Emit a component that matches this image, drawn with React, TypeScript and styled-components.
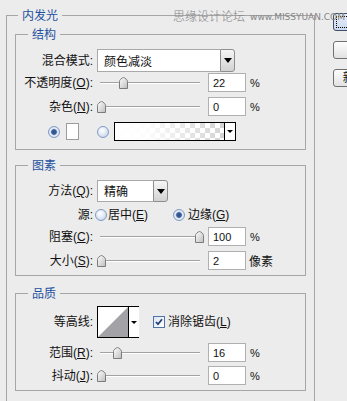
import React, { useId } from "react";
import styled, { createGlobalStyle, css } from "styled-components";

const GlobalStyle = createGlobalStyle`
  html, body { margin: 0; padding: 0; background: #ececec; }
  body {
    font-family: "Liberation Sans", "Noto Sans CJK SC", sans-serif;
    font-size: 12px;
    color: #111;
  }
`;

const Page = styled.div`
  position: relative;
  display: flex;
  align-items: flex-start;
  width: 347px;
  height: 401px;
  overflow: hidden;
  background: #ececec;
`;

const Outer = styled.fieldset`
  box-sizing: border-box;
  flex: none;
  width: 309px;
  height: 440px;
  margin: 7px 0 0 6px;
  padding: 3px 8px 0 8px;
  border: 1px solid #a6a6a6;
  min-width: 0;
`;

const Group = styled.fieldset<{ $mt?: number; $pt: number; $pb: number }>`
  box-sizing: border-box;
  margin: ${(p) => p.$mt ?? 0}px 0 0 0;
  padding: ${(p) => p.$pt}px 0 ${(p) => p.$pb}px 0;
  border: 1px solid #a6a6a6;
  min-width: 0;
`;

const Legend = styled.legend<{ $ml: number }>`
  margin-left: ${(p) => p.$ml}px;
  padding: 0 4px;
  font-family: "Noto Sans CJK SC", sans-serif;
  font-size: 12px;
  line-height: 16px;
  color: #1f519f;
`;

const Row = styled.div<{ $h: number; $mt?: number; $pl?: number }>`
  display: flex;
  align-items: center;
  height: ${(p) => p.$h}px;
  margin-top: ${(p) => p.$mt ?? 0}px;
  padding-left: ${(p) => p.$pl ?? 0}px;
`;

const Label = styled.span<{ $gap?: number }>`
  flex: none;
  width: 77px;
  margin-right: ${(p) => p.$gap ?? 4}px;
  text-align: right;
  white-space: nowrap;
  line-height: 16px;
  color: #111;
`;

const Select = styled.div<{ $w: number; $h: number }>`
  flex: none;
  display: flex;
  width: ${(p) => p.$w}px;
  height: ${(p) => p.$h}px;
`;

const SelectField = styled.div`
  flex: 1;
  display: flex;
  align-items: center;
  box-sizing: border-box;
  padding-left: 6px;
  border: 1px solid #a9a9a9;
  border-right: none;
  background: #fff;
  font-family: "Noto Sans CJK SC", sans-serif;
  line-height: 16px;
`;

const SelectButton = styled.div`
  flex: none;
  width: 15px;
  box-sizing: border-box;
  display: flex;
  align-items: center;
  justify-content: center;
  border: 1px solid #8e8e8e;
  border-radius: 0 3px 3px 0;
  background: linear-gradient(#f6f6f6, #d2d2d2);
  &::after {
    content: "";
    border-left: 4px solid transparent;
    border-right: 4px solid transparent;
    border-top: 5px solid #000;
  }
`;

const SliderBox = styled.div`
  position: relative;
  flex: none;
  width: 107px;
  height: 12px;
`;

const Track = styled.div`
  position: absolute;
  left: 3px;
  right: 4px;
  top: 5px;
  height: 1px;
  background: #a2a2a2;
  border-bottom: 1px solid #ffffff;
`;

const ThumbSvg = styled.svg`
  position: absolute;
  top: 0;
  width: 9px;
  height: 12px;
`;

const NumBox = styled.div`
  flex: none;
  box-sizing: border-box;
  width: 38px;
  height: 19px;
  margin-left: 4px;
  padding-left: 4px;
  display: flex;
  align-items: center;
  border: 1px solid #b0b0b0;
  background: #fff;
  font-family: "Liberation Sans", sans-serif;
  font-size: 11px;
  color: #111;
`;

const Unit = styled.span`
  margin-left: 4px;
  font-family: "Liberation Sans", "Noto Sans CJK SC", sans-serif;
  font-size: 11px;
  line-height: 16px;
  color: #111;
`;

const UnitCjk = styled.span`
  margin-left: 3px;
  font-family: "Noto Sans CJK SC", sans-serif;
  font-size: 12px;
  line-height: 16px;
  color: #111;
`;

const Radio = styled.span<{ $on?: boolean; $ml?: number }>`
  flex: none;
  width: 12px;
  height: 12px;
  margin-left: ${(p) => p.$ml ?? 0}px;
  box-sizing: border-box;
  border-radius: 50%;
  border: 1px solid #7f9cc4;
  background: radial-gradient(circle at 40% 35%, #ffffff 0, #e3ebf6 45%, #b9cbe3 100%);
  ${(p) =>
    p.$on &&
    css`
      background: radial-gradient(circle at 50% 50%, #2d5089 0, #3a5f9c 2.4px, #c6d4ea 3.2px, #eef3fa 4px, #b9cbe3 6px);
    `}
`;

const OptionText = styled.span<{ $ml?: number }>`
  margin-left: ${(p) => p.$ml ?? 2}px;
  line-height: 16px;
  white-space: nowrap;
`;

const Swatch = styled.span<{ $ml: number }>`
  flex: none;
  box-sizing: border-box;
  width: 13px;
  height: 17px;
  margin-left: ${(p) => p.$ml}px;
  border: 1px solid #9c9c9c;
  background: #fff;
`;

const GradientBox = styled.div`
  flex: none;
  display: flex;
  box-sizing: border-box;
  width: 122px;
  height: 19px;
  margin-left: 5px;
  border: 1px solid #000;
  background: #fff;
`;

const GradientFill = styled.div`
  flex: 1;
  background:
    linear-gradient(to right, #ffffff 0%, rgba(255, 255, 255, 0.92) 30%, rgba(255, 255, 255, 0) 100%),
    repeating-conic-gradient(#d3d3d3 0 25%, #ffffff 0 50%) 0 0 / 10px 10px;
`;

const MiniArrow = styled.div`
  flex: none;
  width: 10px;
  display: flex;
  align-items: center;
  justify-content: center;
  border-left: 1px solid #000;
  background: #fff;
  &::after {
    content: "";
    border-left: 3px solid transparent;
    border-right: 3px solid transparent;
    border-top: 3px solid #000;
  }
`;

const ContourBox = styled.div`
  flex: none;
  display: flex;
  box-sizing: border-box;
  width: 42px;
  height: 32px;
  border: 1px solid #000;
  background: #fff;
`;

const ContourPreview = styled.svg`
  flex: none;
  width: 30px;
  height: 30px;
`;

const CheckBox = styled.span`
  flex: none;
  box-sizing: border-box;
  width: 12px;
  height: 12px;
  margin-left: 14px;
  display: flex;
  align-items: center;
  justify-content: center;
  border: 1px solid #4f74aa;
  background: linear-gradient(135deg, #dce6f3, #ffffff);
`;

const Watermark = styled.div`
  position: absolute;
  left: 173px;
  top: 7px;
  display: flex;
  align-items: center;
  gap: 5px;
  height: 17px;
  color: #858585;
  pointer-events: none;
`;

const WatermarkCn = styled.span`
  font-family: "Noto Sans CJK SC", sans-serif;
  font-size: 12px;
  line-height: 16px;
  font-weight: 300;
`;

const WatermarkEn = styled.span`
  font-family: "DejaVu Sans", sans-serif;
  font-size: 9px;
  line-height: 12px;
  margin-top: 2px;
`;

const SideCol = styled.div`
  flex: none;
  display: flex;
  flex-direction: column;
  gap: 10px;
  margin: 13px 0 0 18px;
`;

const SideButton = styled.div<{ $default?: boolean }>`
  flex: none;
  box-sizing: border-box;
  width: 97px;
  height: 18px;
  display: flex;
  align-items: center;
  justify-content: center;
  border: 1px solid #707070;
  border-radius: 3px;
  background: linear-gradient(#fdfdfd, #e2e2e2);
  font-family: "Liberation Sans", "Noto Sans CJK SC", sans-serif;
  font-size: 12px;
  line-height: 16px;
  color: #111;
  ${(p) =>
    p.$default &&
    css`
      border-color: #3f5068;
      background: linear-gradient(#e9effa, #c9d8ef);
      outline: 1px dotted #000;
      outline-offset: -4px;
    `}
`;

function Slider({ value }: { value: number }) {
  const id = useId().replace(/:/g, "");
  return (
    <SliderBox>
      <Track />
      <ThumbSvg viewBox="0 0 9 12" style={{ left: Math.round(value * 0.98) }}>
        <defs>
          <linearGradient id={`g${id}`} x1="0" y1="0" x2="1" y2="1">
            <stop offset="0" stopColor="#ffffff" />
            <stop offset="1" stopColor="#bdbdbd" />
          </linearGradient>
        </defs>
        <path
          d="M0.5 11.5 V4.5 Q0.5 3.2 1.6 2.3 L3.4 0.9 Q4.5 0.1 5.6 0.9 L7.4 2.3 Q8.5 3.2 8.5 4.5 V11.5 Z"
          fill={`url(#g${id})`}
          stroke="#7c7c7c"
          strokeWidth="1"
        />
      </ThumbSvg>
    </SliderBox>
  );
}

function Key({ k }: { k: string }) {
  return (
    <>
      (<u>{k}</u>):
    </>
  );
}

export default function App() {
  return (
    <Page>
      <GlobalStyle />
      <Outer>
        <Legend $ml={3}>内发光</Legend>

        <Group $pt={7} $pb={8}>
          <Legend $ml={12}>结构</Legend>
          <Row $h={23}>
            <Label>混合模式:</Label>
            <Select $w={138} $h={23}>
              <SelectField>颜色减淡</SelectField>
              <SelectButton />
            </Select>
          </Row>
          <Row $h={19} $mt={1}>
            <Label>
              不透明度<Key k="O" />
            </Label>
            <Slider value={22} />
            <NumBox>22</NumBox>
            <Unit>%</Unit>
          </Row>
          <Row $h={19} $mt={5}>
            <Label>
              杂色<Key k="N" />
            </Label>
            <Slider value={0} />
            <NumBox>0</NumBox>
            <Unit>%</Unit>
          </Row>
          <Row $h={19} $mt={6} $pl={32}>
            <Radio $on />
            <Swatch $ml={6} />
            <Radio $ml={18} />
            <GradientBox>
              <GradientFill />
              <MiniArrow />
            </GradientBox>
          </Row>
        </Group>

        <Group $mt={7} $pt={7} $pb={5}>
          <Legend $ml={12}>图素</Legend>
          <Row $h={22}>
            <Label>
              方法<Key k="Q" />
            </Label>
            <Select $w={71} $h={22}>
              <SelectField>精确</SelectField>
              <SelectButton />
            </Select>
          </Row>
          <Row $h={20} $mt={3}>
            <Label $gap={2}>源:</Label>
            <Radio />
            <OptionText $ml={1}>
              居中(<u>E</u>)
            </OptionText>
            <Radio $on $ml={25} />
            <OptionText $ml={3}>
              边缘(<u>G</u>)
            </OptionText>
          </Row>
          <Row $h={19} $mt={2}>
            <Label>
              阻塞<Key k="C" />
            </Label>
            <Slider value={100} />
            <NumBox>100</NumBox>
            <Unit>%</Unit>
          </Row>
          <Row $h={19} $mt={5}>
            <Label>
              大小<Key k="S" />
            </Label>
            <Slider value={0} />
            <NumBox>2</NumBox>
            <UnitCjk>像素</UnitCjk>
          </Row>
        </Group>

        <Group $mt={9} $pt={5} $pb={5}>
          <Legend $ml={12}>品质</Legend>
          <Row $h={32}>
            <Label>等高线:</Label>
            <ContourBox>
              <ContourPreview viewBox="0 0 30 30">
                <polygon points="0,30 30,0 30,30" fill="#a3a2a6" />
              </ContourPreview>
              <MiniArrow />
            </ContourBox>
            <CheckBox>
              <svg width="8" height="8" viewBox="0 0 8 8">
                <path d="M1 4 L3 6.2 L7 1.2" fill="none" stroke="#243f7a" strokeWidth="1.8" />
              </svg>
            </CheckBox>
            <OptionText $ml={3}>
              消除锯齿(<u>L</u>)
            </OptionText>
          </Row>
          <Row $h={19} $mt={5}>
            <Label>
              范围<Key k="R" />
            </Label>
            <Slider value={16} />
            <NumBox>16</NumBox>
            <Unit>%</Unit>
          </Row>
          <Row $h={19} $mt={4}>
            <Label>
              抖动<Key k="J" />
            </Label>
            <Slider value={0} />
            <NumBox>0</NumBox>
            <Unit>%</Unit>
          </Row>
        </Group>
      </Outer>

      <SideCol>
        <SideButton $default>确定</SideButton>
        <SideButton>取消</SideButton>
        <SideButton>新建样式(W)...</SideButton>
      </SideCol>

      <Watermark>
        <WatermarkCn>思缘设计论坛</WatermarkCn>
        <WatermarkEn>www.MISSYUAN.COM</WatermarkEn>
      </Watermark>
    </Page>
  );
}
